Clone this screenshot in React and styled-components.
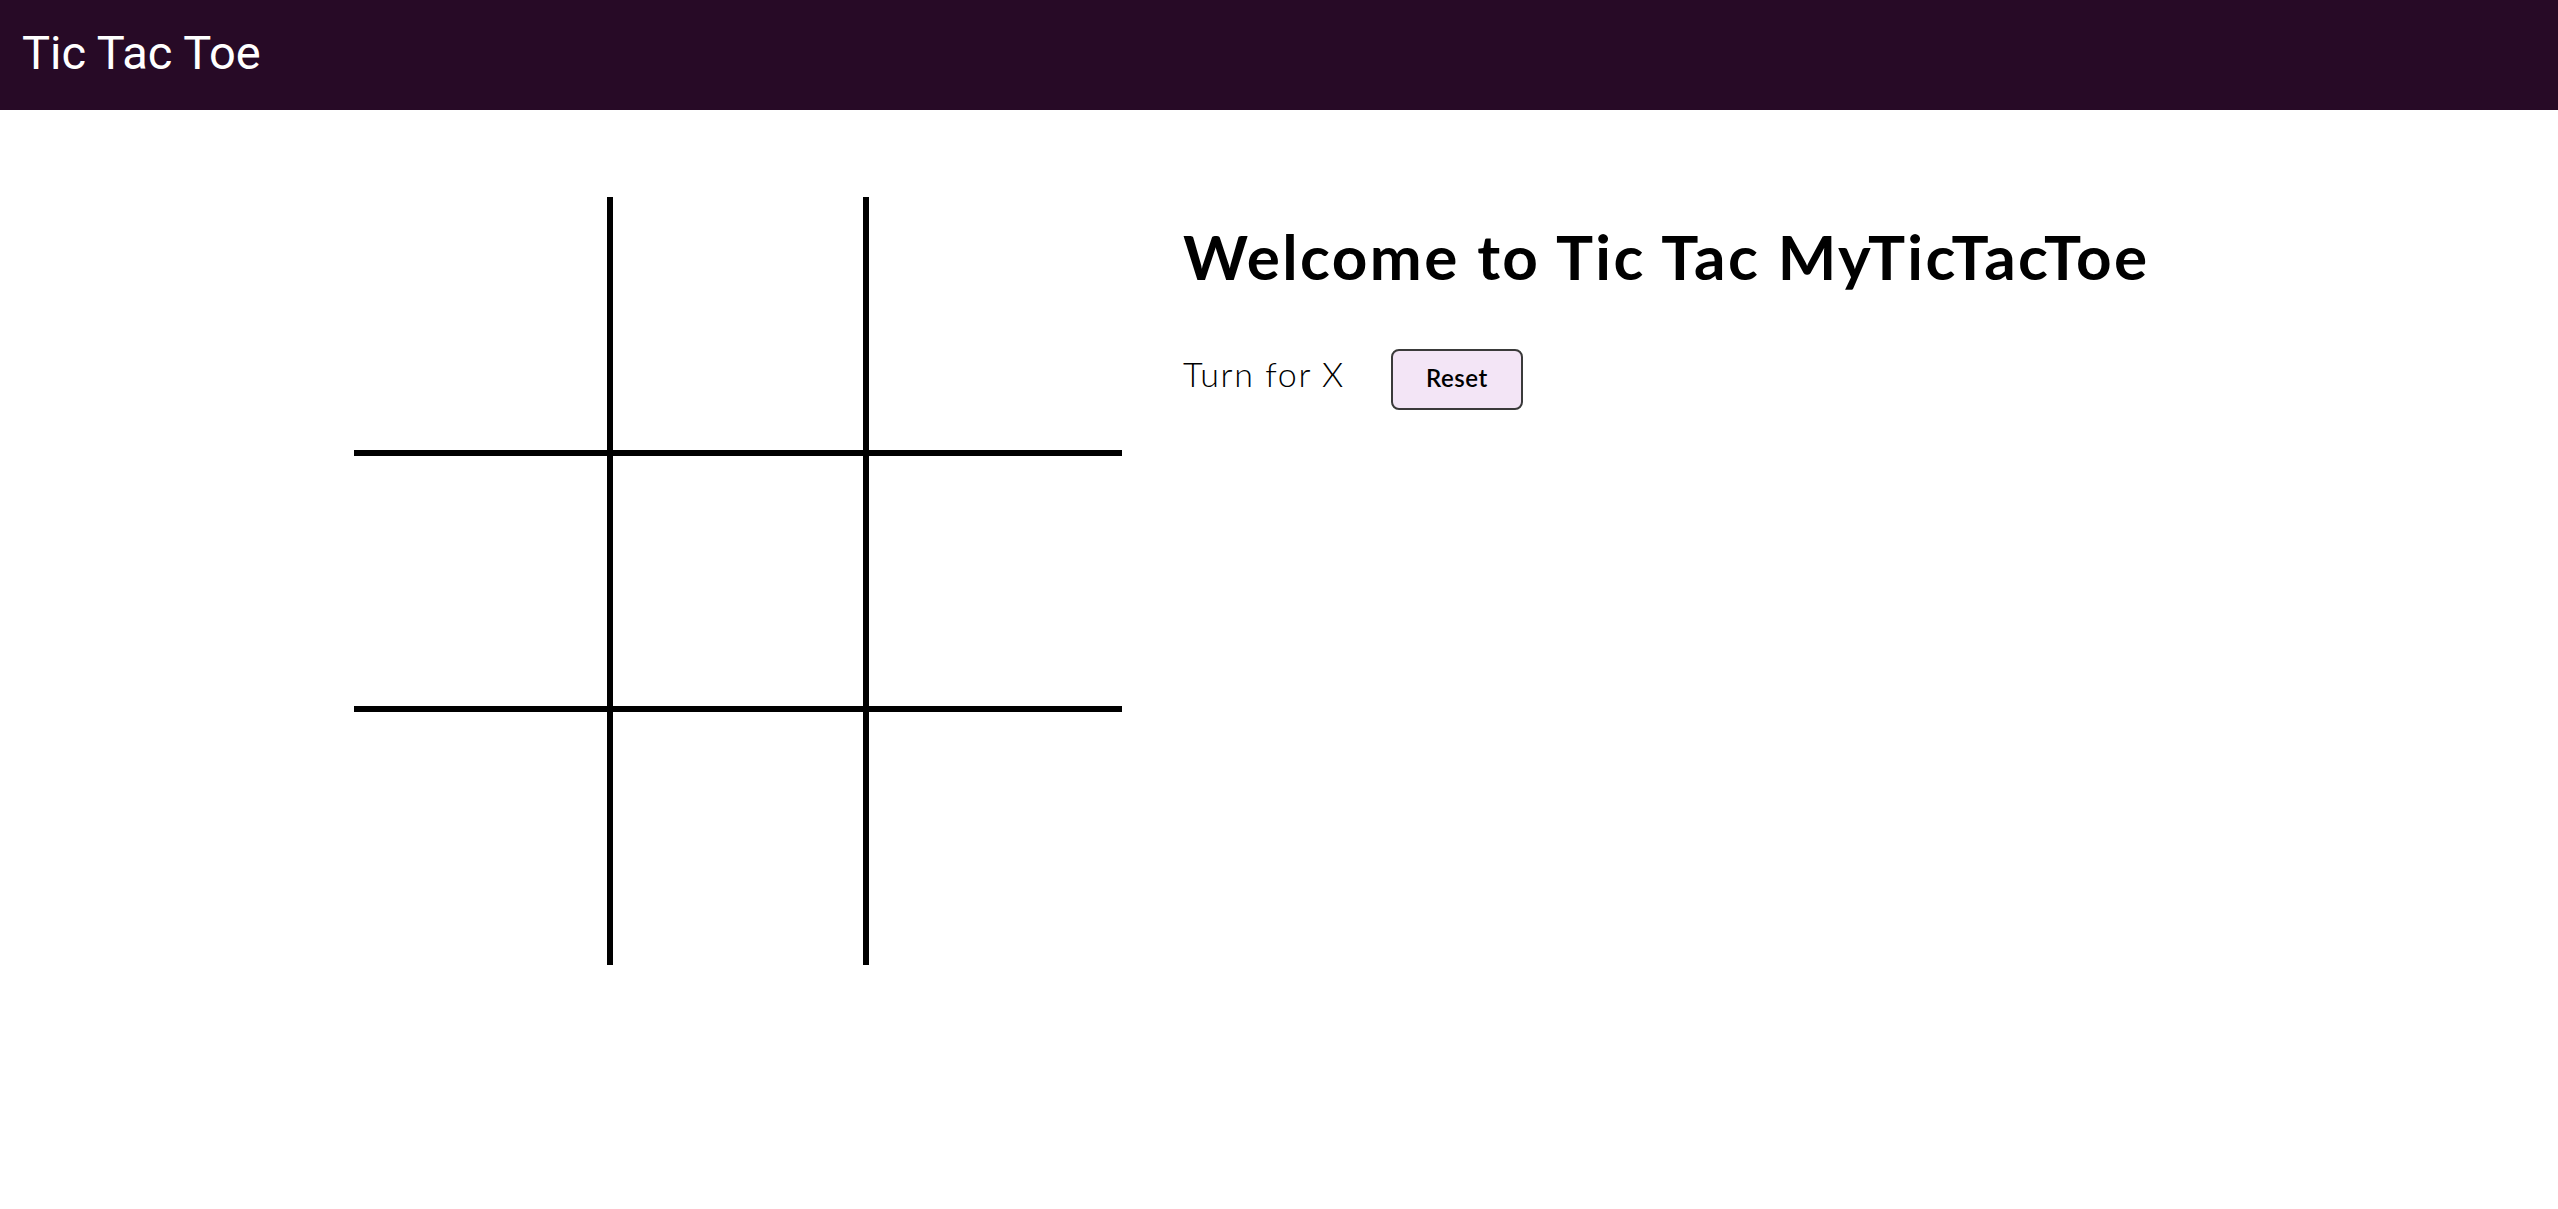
import React, { useState } from "react";
import styled, { createGlobalStyle } from "styled-components";

const Global = createGlobalStyle`
  html, body { margin: 0; padding: 0; background: #ffffff; }
  body { font-family: "Lato", "Noto Sans", sans-serif; }
  * { box-sizing: border-box; }
`;

const Header = styled.header`
  height: 110px;
  background: #270a26;
  display: flex;
  align-items: center;
  padding: 0 22px;
`;

const Brand = styled.div`
  font-family: "Roboto", sans-serif;
  font-size: 47px;
  font-weight: 400;
  color: #ffffff;
  line-height: 1;
  margin-top: -6px;
`;

const Main = styled.main`
  display: flex;
  align-items: flex-start;
  gap: 61px;
  padding: 87px 0 0 354px;
`;

const Board = styled.div`
  display: grid;
  grid-template-columns: repeat(3, 256px);
  grid-template-rows: repeat(3, 256px);
`;

const Cell = styled.button`
  border: 0 solid #000;
  border-top-width: ${(p) => (p.$row > 0 ? "3px" : "0")};
  border-bottom-width: ${(p) => (p.$row < 2 ? "3px" : "0")};
  border-left-width: ${(p) => (p.$col > 0 ? "3px" : "0")};
  border-right-width: ${(p) => (p.$col < 2 ? "3px" : "0")};
  background: transparent;
  padding: 0;
  margin: 0;
  font-family: "Lato", sans-serif;
  font-size: 160px;
  cursor: pointer;
`;

const Side = styled.section`
  display: flex;
  flex-direction: column;
  padding-top: 22px;
`;

const Title = styled.h1`
  margin: 0;
  font-family: "Lato", sans-serif;
  font-weight: 700;
  font-size: 62px;
  letter-spacing: 2.4px;
  line-height: 1.2;
  color: #000;
`;

const Status = styled.div`
  display: flex;
  align-items: baseline;
  gap: 46px;
  margin-top: 56px;
`;

const Turn = styled.span`
  font-family: "Lato", sans-serif;
  font-weight: 300;
  font-size: 34px;
  letter-spacing: 1.6px;
  color: #000;
`;

const ResetButton = styled.button`
  width: 132px;
  height: 61px;
  padding: 0 0 5px;
  border: 2.5px solid #3a3a3a;
  border-radius: 8px;
  background: #f3e5f6;
  font-family: "Lato", sans-serif;
  font-weight: 600;
  font-size: 24px;
  letter-spacing: 0.5px;
  color: #000;
  cursor: pointer;
`;

export default function App() {
  const [cells, setCells] = useState(Array(9).fill(""));
  const [xTurn, setXTurn] = useState(true);
  const play = (i) => {
    if (cells[i]) return;
    const next = cells.slice();
    next[i] = xTurn ? "X" : "O";
    setCells(next);
    setXTurn(!xTurn);
  };
  return (
    <>
      <Global />
      <Header>
        <Brand>Tic Tac Toe</Brand>
      </Header>
      <Main>
        <Board>
          {cells.map((v, i) => (
            <Cell key={i} $row={Math.floor(i / 3)} $col={i % 3} onClick={() => play(i)}>
              {v}
            </Cell>
          ))}
        </Board>
        <Side>
          <Title>Welcome to Tic Tac MyTicTacToe</Title>
          <Status>
            <Turn>Turn for {xTurn ? "X" : "O"}</Turn>
            <ResetButton
              onClick={() => {
                setCells(Array(9).fill(""));
                setXTurn(true);
              }}
            >
              Reset
            </ResetButton>
          </Status>
        </Side>
      </Main>
    </>
  );
}
